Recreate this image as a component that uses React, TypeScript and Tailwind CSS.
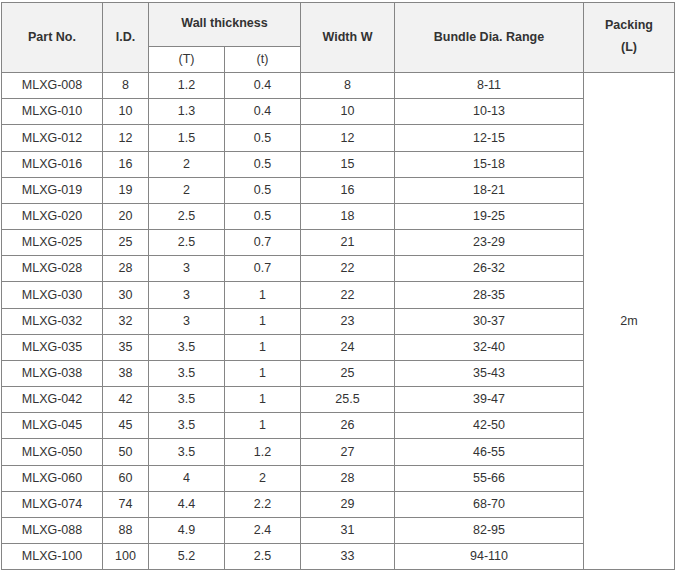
const rows: [string, string, string, string, string, string][] = [
  ['MLXG-008', '8', '1.2', '0.4', '8', '8-11'],
  ['MLXG-010', '10', '1.3', '0.4', '10', '10-13'],
  ['MLXG-012', '12', '1.5', '0.5', '12', '12-15'],
  ['MLXG-016', '16', '2', '0.5', '15', '15-18'],
  ['MLXG-019', '19', '2', '0.5', '16', '18-21'],
  ['MLXG-020', '20', '2.5', '0.5', '18', '19-25'],
  ['MLXG-025', '25', '2.5', '0.7', '21', '23-29'],
  ['MLXG-028', '28', '3', '0.7', '22', '26-32'],
  ['MLXG-030', '30', '3', '1', '22', '28-35'],
  ['MLXG-032', '32', '3', '1', '23', '30-37'],
  ['MLXG-035', '35', '3.5', '1', '24', '32-40'],
  ['MLXG-038', '38', '3.5', '1', '25', '35-43'],
  ['MLXG-042', '42', '3.5', '1', '25.5', '39-47'],
  ['MLXG-045', '45', '3.5', '1', '26', '42-50'],
  ['MLXG-050', '50', '3.5', '1.2', '27', '46-55'],
  ['MLXG-060', '60', '4', '2', '28', '55-66'],
  ['MLXG-074', '74', '4.4', '2.2', '29', '68-70'],
  ['MLXG-088', '88', '4.9', '2.4', '31', '82-95'],
  ['MLXG-100', '100', '5.2', '2.5', '33', '94-110']
];

const th = 'border border-[#858585] bg-[#f2f2f2] font-bold text-[12.5px] text-[#333] text-center';
const td = 'border border-[#858585] text-center p-0';

export default function App() {
  return (
    <div className="bg-white pt-[2px] pl-[1px] font-['Liberation_Sans',Arial,sans-serif] text-[12.5px] text-[#333]">
      <table className="border-collapse table-fixed w-[673px]">
        <colgroup>
          <col className="w-[101px]" />
          <col className="w-[46px]" />
          <col className="w-[76px]" />
          <col className="w-[76px]" />
          <col className="w-[94px]" />
          <col className="w-[189px]" />
          <col className="w-[91px]" />
        </colgroup>
        <thead>
          <tr className="h-[44px]">
            <th rowSpan={2} className={th}>Part No.</th>
            <th rowSpan={2} className={th}>I.D.</th>
            <th colSpan={2} className={`${th} align-top pt-[11px]`}>Wall thickness</th>
            <th rowSpan={2} className={th}>Width W</th>
            <th rowSpan={2} className={th}>Bundle Dia. Range</th>
            <th rowSpan={2} className={`${th} leading-[22px] pb-[4px]`}>
              Packing
              <br />
              (L)
            </th>
          </tr>
          <tr className="h-[26px]">
            <th className="border border-[#858585] bg-white font-normal text-[12.5px] text-center">(T)</th>
            <th className="border border-[#858585] bg-white font-normal text-[12.5px] text-center">(t)</th>
          </tr>
        </thead>
        <tbody>
          {rows.map((r, i) => (
            <tr key={r[0]} className={i % 6 === 2 ? 'h-[27px]' : 'h-[26px]'}>
              {r.map((c, j) => (
                <td key={j} className={td}>
                  {c}
                </td>
              ))}
              {i === 0 && (
                <td rowSpan={rows.length} className={td}>
                  2m
                </td>
              )}
            </tr>
          ))}
        </tbody>
      </table>
    </div>
  );
}
